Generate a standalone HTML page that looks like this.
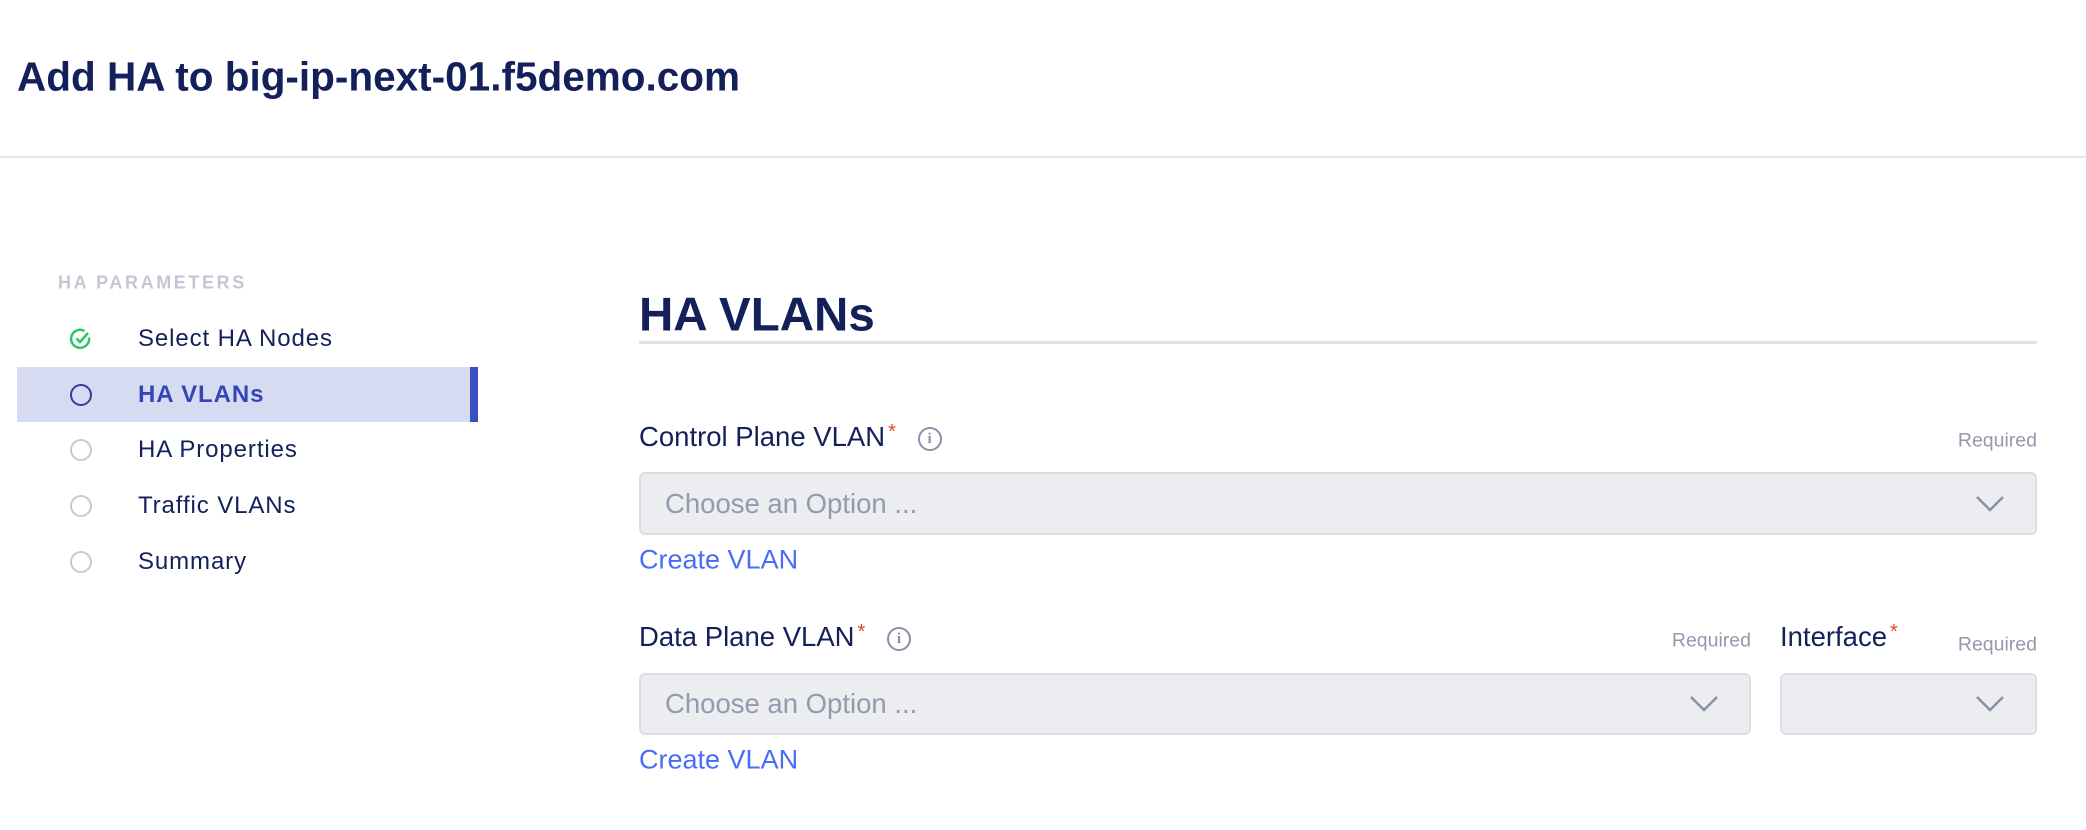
<!DOCTYPE html>
<html><head><meta charset="utf-8"><style>
*{box-sizing:border-box;margin:0;padding:0}
body{width:2086px;height:830px;background:#fff;font-family:"Liberation Sans",sans-serif;color:#13205a;position:relative;overflow:hidden}
.a{position:absolute;white-space:nowrap}
.item{position:absolute;left:138px;font-size:24px;letter-spacing:0.9px;transform:translateY(-50%)}
.ic{position:absolute;left:70px;width:22px;height:22px;border-radius:50%;border:2.5px solid #c5c8d6;transform:translateY(-50%)}
.sel{position:absolute;background:#ecedf1;border:2px solid #dcdee6;border-radius:6px}
.ph{position:absolute;left:24px;top:50%;transform:translateY(-50%);font-size:27.5px;color:#9599ad}
.chev{position:absolute;right:30px;top:50%;transform:translateY(-50%)}
.lbl{font-size:27.5px;transform:translateY(-50%)}
.req{font-size:19.5px;color:#9599ad;transform:translateY(-50%)}
.star{color:#e8402c;font-size:20px;vertical-align:top;margin-left:3px}
.link{font-size:27px;color:#4a6df7;transform:translateY(-50%)}
.info{display:inline-block;width:24px;height:24px;border:2px solid #8b90a8;border-radius:50%;font-size:15px;font-family:"Liberation Serif",serif;color:#8b90a8;text-align:center;line-height:20px;font-weight:bold;vertical-align:middle}
</style></head><body>
<div class="a" style="left:17px;top:77px;transform:translateY(-50%);font-size:40.5px;font-weight:bold">Add HA to big-ip-next-01.f5demo.com</div>
<div class="a" style="left:0;top:156px;width:2086px;height:2px;background:#e4e5ee"></div>

<div class="a" style="left:58px;top:283px;transform:translateY(-50%);font-size:18px;font-weight:bold;color:#c3c6d4;letter-spacing:2.6px">HA PARAMETERS</div>
<div class="a" style="left:17px;top:367px;width:461px;height:55px;background:#d7dbf1"></div>
<div class="a" style="left:470px;top:367px;width:8px;height:55px;background:#3a4fc2"></div>

<svg class="a" style="left:69px;top:327px" width="24" height="24" viewBox="0 0 24 24"><path d="M20 10.5A9 9 0 1 1 15.5 4" fill="none" stroke="#2bc56a" stroke-width="2.5"/><path d="M7.5 11.5l3.5 3.5 8-9" fill="none" stroke="#2bc56a" stroke-width="2.5"/></svg>
<div class="item a" style="top:339px">Select HA Nodes</div>
<div class="ic" style="top:395px;border-color:#2f3f9e"></div>
<div class="item a" style="top:395px;font-weight:bold;color:#3446b6">HA VLANs</div>
<div class="ic" style="top:450px"></div>
<div class="item a" style="top:450px">HA Properties</div>
<div class="ic" style="top:506px"></div>
<div class="item a" style="top:506px">Traffic VLANs</div>
<div class="ic" style="top:562px"></div>
<div class="item a" style="top:562px">Summary</div>

<div class="a" style="left:639px;top:315px;transform:translateY(-50%);font-size:47.5px;font-weight:bold">HA VLANs</div>
<div class="a" style="left:639px;top:341px;width:1398px;height:3px;background:#dfe1e9"></div>

<div class="a lbl" style="left:639px;top:437px">Control Plane VLAN<span class="star">*</span> <span class="info" style="margin-left:14px">i</span></div>
<div class="a req" style="right:49px;top:441px">Required</div>
<div class="sel" style="left:639px;top:472px;width:1398px;height:63px"><div class="ph">Choose an Option ...</div><svg class="chev" width="30" height="18" viewBox="0 0 30 18"><path d="M2 2l13 13 13-13" fill="none" stroke="#8b90a8" stroke-width="2.5"/></svg></div>
<div class="a link" style="left:639px;top:560px">Create VLAN</div>

<div class="a lbl" style="left:639px;top:637px">Data Plane VLAN<span class="star">*</span> <span class="info" style="margin-left:14px">i</span></div>
<div class="a req" style="right:335px;top:641px">Required</div>
<div class="a lbl" style="left:1780px;top:637px">Interface<span class="star">*</span></div>
<div class="a req" style="right:49px;top:645px">Required</div>
<div class="sel" style="left:639px;top:673px;width:1112px;height:62px"><div class="ph">Choose an Option ...</div><svg class="chev" width="30" height="18" viewBox="0 0 30 18"><path d="M2 2l13 13 13-13" fill="none" stroke="#8b90a8" stroke-width="2.5"/></svg></div>
<div class="sel" style="left:1780px;top:673px;width:257px;height:62px"><svg class="chev" width="30" height="18" viewBox="0 0 30 18"><path d="M2 2l13 13 13-13" fill="none" stroke="#8b90a8" stroke-width="2.5"/></svg></div>
<div class="a link" style="left:639px;top:760px">Create VLAN</div>
</body></html>
